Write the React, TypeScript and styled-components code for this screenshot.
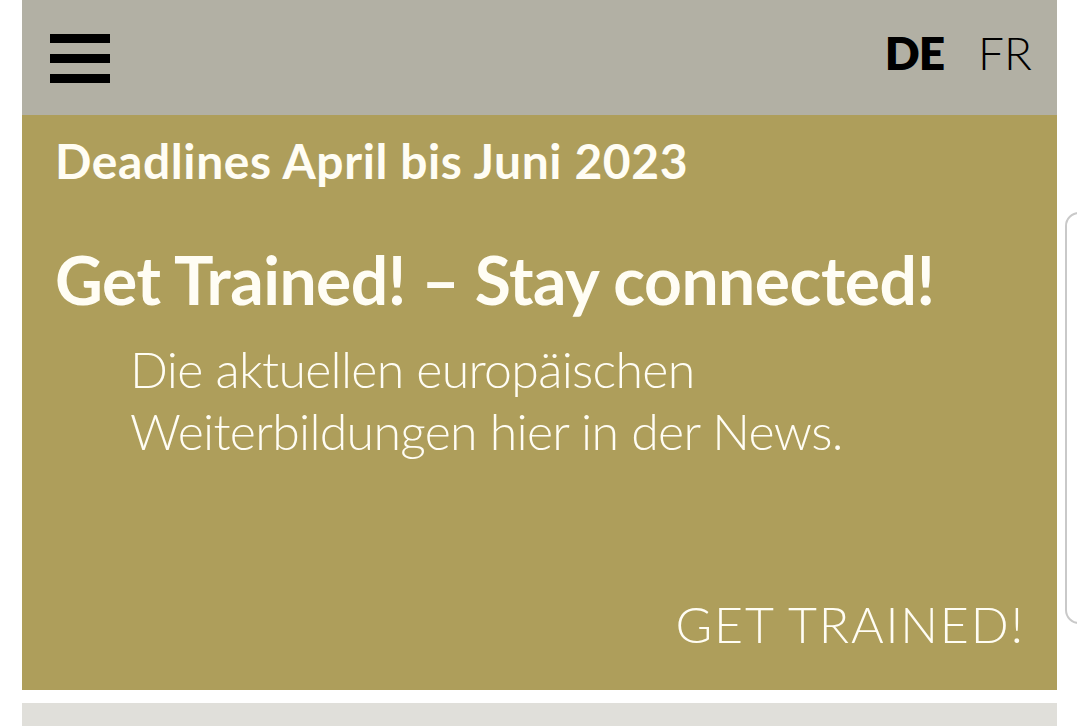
import React from "react";
import styled, { createGlobalStyle } from "styled-components";

const GlobalStyle = createGlobalStyle`
  html, body {
    margin: 0;
    padding: 0;
    background: #ffffff;
    font-family: "Lato", "Open Sans", sans-serif;
    overflow: hidden;
  }
`;

const Page = styled.div`
  width: 1035px;
  margin-left: 22px;
  display: flex;
  flex-direction: column;
`;

const Header = styled.header`
  height: 115px;
  background: #b2b0a4;
  display: flex;
  align-items: center;
  justify-content: space-between;
  padding: 0 25px 0 28px;
  box-sizing: border-box;
`;

const Burger = styled.button`
  width: 60px;
  height: 49px;
  padding: 0;
  border: 0;
  background: transparent;
  display: flex;
  flex-direction: column;
  justify-content: space-between;
  margin-top: 1px;

  span {
    display: block;
    height: 9px;
    background: #000;
  }
`;

const Langs = styled.nav`
  display: flex;
  gap: 34px;
  align-items: center;
  margin-bottom: 10px;
`;

const Lang = styled.a<{ $active?: boolean }>`
  font-size: 46px;
  font-weight: ${(p) => (p.$active ? 800 : 300)};
  color: #000;
  text-decoration: none;
  letter-spacing: ${(p) => (p.$active ? "-1px" : "0")};
`;

const Teaser = styled.section`
  height: 575px;
  background: #ae9e5b;
  color: #fffdf4;
  display: flex;
  flex-direction: column;
  padding: 18px 34px 36px 33px;
  box-sizing: border-box;
`;

const Kicker = styled.h3`
  margin: 0;
  font-size: 48px;
  font-weight: 700;
  line-height: 56px;
  letter-spacing: 0.6px;
`;

const Title = styled.h2`
  margin: 53px 0 0;
  font-size: 66px;
  font-weight: 700;
  line-height: 76px;
  letter-spacing: -0.5px;
`;

const Lead = styled.p`
  margin: 20px 0 0 75px;
  font-size: 50px;
  font-weight: 300;
  line-height: 62px;
  letter-spacing: -0.7px;
`;

const Cta = styled.a`
  margin-top: auto;
  align-self: flex-end;
  font-size: 50px;
  font-weight: 300;
  color: #fffdf4;
  text-decoration: none;
  line-height: 60px;
  letter-spacing: 1.8px;
  margin-right: -2px;
`;

const NextBar = styled.div`
  margin-top: 13px;
  height: 40px;
  background: #e0dfda;
`;

const SideTab = styled.div`
  position: fixed;
  left: 1065px;
  top: 212px;
  width: 40px;
  height: 412px;
  border: 2px solid #c9c9c9;
  border-radius: 14px;
  box-sizing: border-box;
  background: #fff;
`;

export default function App() {
  return (
    <>
      <GlobalStyle />
      <Page>
        <Header>
          <Burger aria-label="Menü">
            <span />
            <span />
            <span />
          </Burger>
          <Langs>
            <Lang $active href="#">DE</Lang>
            <Lang href="#">FR</Lang>
          </Langs>
        </Header>
        <Teaser>
          <Kicker>Deadlines April bis Juni 2023</Kicker>
          <Title>Get Trained! – Stay connected!</Title>
          <Lead>
            Die aktuellen europäischen
            <br />
            Weiterbildungen hier in der News.
          </Lead>
          <Cta href="#">GET TRAINED!</Cta>
        </Teaser>
        <NextBar />
      </Page>
      <SideTab />
    </>
  );
}
